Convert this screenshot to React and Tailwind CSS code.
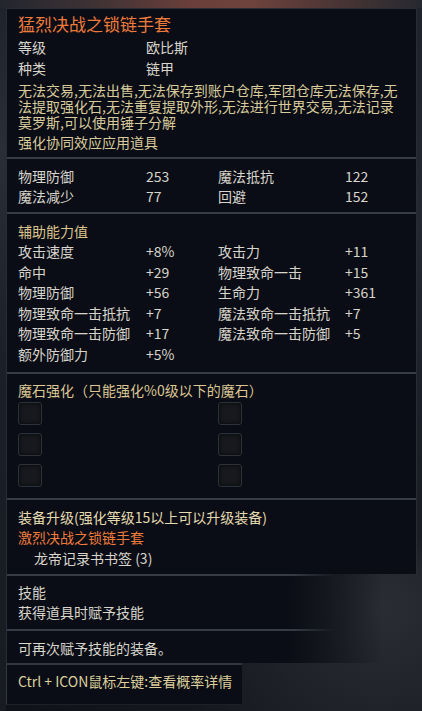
import React from "react";

const Row2 = ({ label, value }) => (
  <div className="grid grid-cols-[128px_1fr] h-[21px] leading-[21px] text-[#d8d5cc]">
    <span>{label}</span>
    <span>{value}</span>
  </div>
);

const StatRow = ({ a, b, c, d, lh = "leading-[20px] h-[20px]" }) => (
  <div className={`grid grid-cols-[128px_72px_127px_1fr] text-[#d8d5cc] whitespace-nowrap ${lh}`}>
    <span>{a}</span>
    <span>{b}</span>
    <span>{c}</span>
    <span>{d}</span>
  </div>
);

const Divider = () => <div className="h-[2px] bg-[#363b45]" />;

const FadeDivider = () => (
  <div className="h-[2px] bg-[linear-gradient(to_right,#363b45_0%,#363b45_70%,transparent_80%)]" />
);

const Slot = () => (
  <div className="w-[24px] h-[23px] rounded-[3px] border border-[#2d3139] bg-[#17191e] shadow-[inset_0_0_4px_rgba(0,0,0,0.8)]" />
);

const aux = [
  ["攻击速度", "+8%", "攻击力", "+11"],
  ["命中", "+29", "物理致命一击", "+15"],
  ["物理防御", "+56", "生命力", "+361"],
  ["物理致命一击抵抗", "+7", "魔法致命一击抵抗", "+7"],
  ["物理致命一击防御", "+17", "魔法致命一击防御", "+5"],
  ["额外防御力", "+5%", "", ""],
];

export default function App() {
  return (
    <div className="w-[422px] h-[711px] overflow-hidden flex flex-col bg-[#0f1218] font-['Noto_Sans_CJK_SC','Noto_Sans',sans-serif] text-[14px]">
      {/* game scene behind the tooltip */}
      <div className="h-[8px] shrink-0 bg-[linear-gradient(to_right,#23262e_0%,#3e3234_22%,#6a3f3b_45%,#6e423d_60%,#4a3534_80%,#262930_100%)]" />
      <div className="flex flex-1 bg-[radial-gradient(circle_at_380px_600px,#2a2d33_0%,#14171d_30%,#0e1116_60%)]">
        <div className="w-[6px] shrink-0 bg-[linear-gradient(to_bottom,#1f232b_0%,#2a2e36_20%,#1b1f27_50%,#181b22_100%)]" />

        {/* tooltip */}
        <div className="w-[411px] shrink-0 flex flex-col">
          <div className="border border-b-0 border-[#272c36] bg-[#0a0d15]">
            <div className="pt-[4px] pb-[5px] px-[11px]">
              <div className="h-[24px] leading-[22px] text-[17px] text-[#ef7b3b]">猛烈决战之锁链手套</div>
              <Row2 label="等级" value="欧比斯" />
              <Row2 label="种类" value="链甲" />
              <div className="mt-[3px] leading-[16px] text-[#d9cb9b] whitespace-nowrap">
                <div>无法交易,无法出售,无法保存到账户仓库,军团仓库无法保存,无</div>
                <div>法提取强化石,无法重复提取外形,无法进行世界交易,无法记录</div>
                <div>莫罗斯,可以使用锤子分解</div>
              </div>
              <div className="mt-[2px] h-[20px] leading-[20px] text-[#d9cb9b]">强化协同效应应用道具</div>
            </div>
            <Divider />

            <div className="pt-[7px] pb-[6px] px-[11px]">
              <StatRow a="物理防御" b="253" c="魔法抵抗" d="122" />
              <StatRow a="魔法减少" b="77" c="回避" d="152" />
            </div>
            <Divider />

            <div className="pt-[7px] pb-[7px] px-[11px]">
              <div className="h-[20px] leading-[20px] text-[#dcc38c]">辅助能力值</div>
              {aux.map((r, i) => (
                <StatRow key={i} a={r[0]} b={r[1]} c={r[2]} d={r[3]} lh="leading-[20.6px] h-[20.6px]" />
              ))}
            </div>
            <Divider />

            <div className="pt-[6px] pb-[11px] px-[11px]">
              <div className="h-[20px] leading-[20px] text-[#dcc794]">魔石强化（只能强化%0级以下的魔石）</div>
              <div className="mt-[2px] grid grid-cols-[200px_1fr] gap-y-[8px]">
                {[0, 1, 2, 3, 4, 5].map((i) => (
                  <Slot key={i} />
                ))}
              </div>
            </div>
            <Divider />

            <div className="pt-[7px] pb-[5.5px] px-[11px] leading-[20.5px]">
              <div className="h-[20.5px] text-[#e4dab0]">装备升级(强化等级15以上可以升级装备)</div>
              <div className="h-[20.5px] text-[#f07c3c]">激烈决战之锁链手套</div>
              <div className="h-[20.5px] pl-[16px] text-[#d8d5cc]">龙帝记录书书签 (3)</div>
            </div>
          </div>

          {/* lower part fading into the scene */}
          <div className="border-l border-[#272c36] bg-[linear-gradient(to_right,#0a0d15_0%,#0a0d15_68%,rgba(10,13,21,0.6)_78%,transparent_92%)]">
            <FadeDivider />
            <div className="pt-[6px] pb-[7px] px-[11px] leading-[20px] text-[#d8d5cc]">
              <div className="h-[20px]">技能</div>
              <div className="h-[20px]">获得道具时赋予技能</div>
            </div>
            <FadeDivider />
            <div className="pt-[7px] pb-[5px] px-[11px] h-[32px] leading-[20px] text-[#d8d5cc]">可再次赋予技能的装备。</div>
          </div>
          <div className="w-[236px] border-t-2 border-l border-b border-[#33383f] border-b-[#1c2027] bg-[#0a0d15] pt-[6px] pb-[13px] px-[11px]">
            <div className="h-[20px] leading-[20px] text-[#dccf9c] whitespace-nowrap">Ctrl + ICON鼠标左键:查看概率详情</div>
          </div>
        </div>

        <div className="flex-1 bg-[linear-gradient(to_bottom,#1e222a_0%,#242830_30%,#1c2028_55%,#1a1d23_75%,transparent_80%)]" />
      </div>
    </div>
  );
}
